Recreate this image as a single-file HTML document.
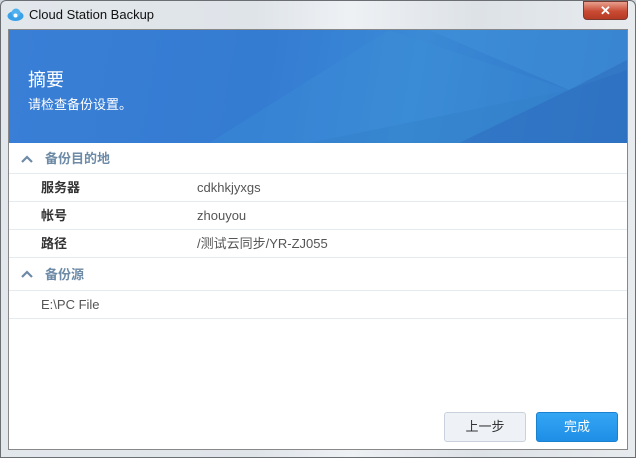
<!DOCTYPE html>
<html><head><meta charset="utf-8"><style>
*{margin:0;padding:0;box-sizing:border-box}
body{width:636px;height:458px;overflow:hidden;font-family:"Liberation Sans","Noto Sans CJK SC",sans-serif;background:#cfd6de;position:relative}
.frame{position:absolute;left:0;top:0;width:636px;height:458px;border:1px solid #6b6f74;border-radius:6px 6px 0 0;background:linear-gradient(90deg,#e2e7ec,#dfe4e9 40%,#eef1f4 55%,#dde2e7 75%,#e7ebee);}
.title{position:absolute;left:29px;top:7px;font-size:13px;color:#111}
.close{position:absolute;left:583px;top:1px;width:45px;height:19px;border-radius:0 0 4px 4px;background:linear-gradient(#e8a08f,#c84a33 55%,#b73a24);border:1px solid #7a3a30;color:#fff;font-size:13px;font-weight:bold;text-align:center;line-height:17px}
.content{position:absolute;left:8px;top:29px;width:620px;height:421px;background:#fff;border:1px solid #888}
.hdr{position:absolute;left:0;top:0;width:618px;height:113px;background:linear-gradient(100deg,#3a7fd6 0%,#347bd2 40%,#3a8ad6 65%,#2f74c6 100%);overflow:hidden}
.h1{position:absolute;left:19px;top:36px;color:#fff;font-size:18px}
.h2{position:absolute;left:19px;top:64px;color:#fff;font-size:13px}
.sec,.row{position:absolute;left:0;width:618px;border-bottom:1px solid #e6ebf0;font-size:13px}
.sec{color:#6d8aa6;font-weight:bold}
.sec span{position:absolute;left:36px}
.sec svg{position:absolute;left:11px}
.row .k{position:absolute;left:32px;font-weight:bold;color:#333}
.row .v{position:absolute;left:188px;color:#555}
.btn{position:absolute;top:382px;width:82px;height:30px;border-radius:3px;font-size:13px;text-align:center;line-height:28px}
</style></head><body>
<div class="frame"></div>
<svg style="position:absolute;left:7px;top:8px" width="17" height="13"><ellipse cx="8.5" cy="8" rx="8" ry="5" fill="#3aa0e8"/><circle cx="9" cy="5" r="4.5" fill="#4fb0f0"/><circle cx="8.5" cy="7.5" r="2" fill="#fff"/></svg>
<div class="title">Cloud Station Backup</div>
<div class="close">✕</div>
<div class="content">
<div class="hdr">
<svg width="618" height="113" style="position:absolute;left:0;top:0">
<polygon points="420,0 618,0 618,40 560,60" fill="#3f8fd8" opacity=".6"/>
<polygon points="560,60 618,30 618,113 450,113" fill="#2e6fc0" opacity=".6"/>
<polygon points="300,113 560,60 450,113" fill="#3583cc" opacity=".6"/>
<polygon points="380,0 560,60 300,113 200,113" fill="#3b8fd8" opacity=".35"/>
</svg>
<div class="h1">摘要</div><div class="h2">请检查备份设置。</div>
</div>
<div class="sec" style="top:114px;height:30px;line-height:30px"><svg width="14" height="30"><path d="M2 18 L7 13 L12 18" stroke="#6d8aa6" stroke-width="2.2" fill="none"/></svg><span>备份目的地</span></div>
<div class="row" style="top:144px;height:28px;line-height:28px"><span class="k">服务器</span><span class="v">cdkhkjyxgs</span></div>
<div class="row" style="top:172px;height:28px;line-height:28px"><span class="k">帐号</span><span class="v">zhouyou</span></div>
<div class="row" style="top:200px;height:28px;line-height:28px"><span class="k">路径</span><span class="v">/测试云同步/YR-ZJ055</span></div>
<div class="sec" style="top:228px;height:33px;line-height:33px"><svg width="14" height="33"><path d="M2 19 L7 14 L12 19" stroke="#6d8aa6" stroke-width="2.2" fill="none"/></svg><span>备份源</span></div>
<div class="row" style="top:261px;height:28px;line-height:28px"><span class="v" style="left:32px">E:\PC File</span></div>
<div class="btn" style="left:435px;background:#eef2f7;border:1px solid #c9d2dc;color:#333">上一步</div>
<div class="btn" style="left:527px;background:linear-gradient(#34a6f4,#1e8ee6);border:1px solid #1a80d0;color:#fff">完成</div>
</div>
</body></html>
